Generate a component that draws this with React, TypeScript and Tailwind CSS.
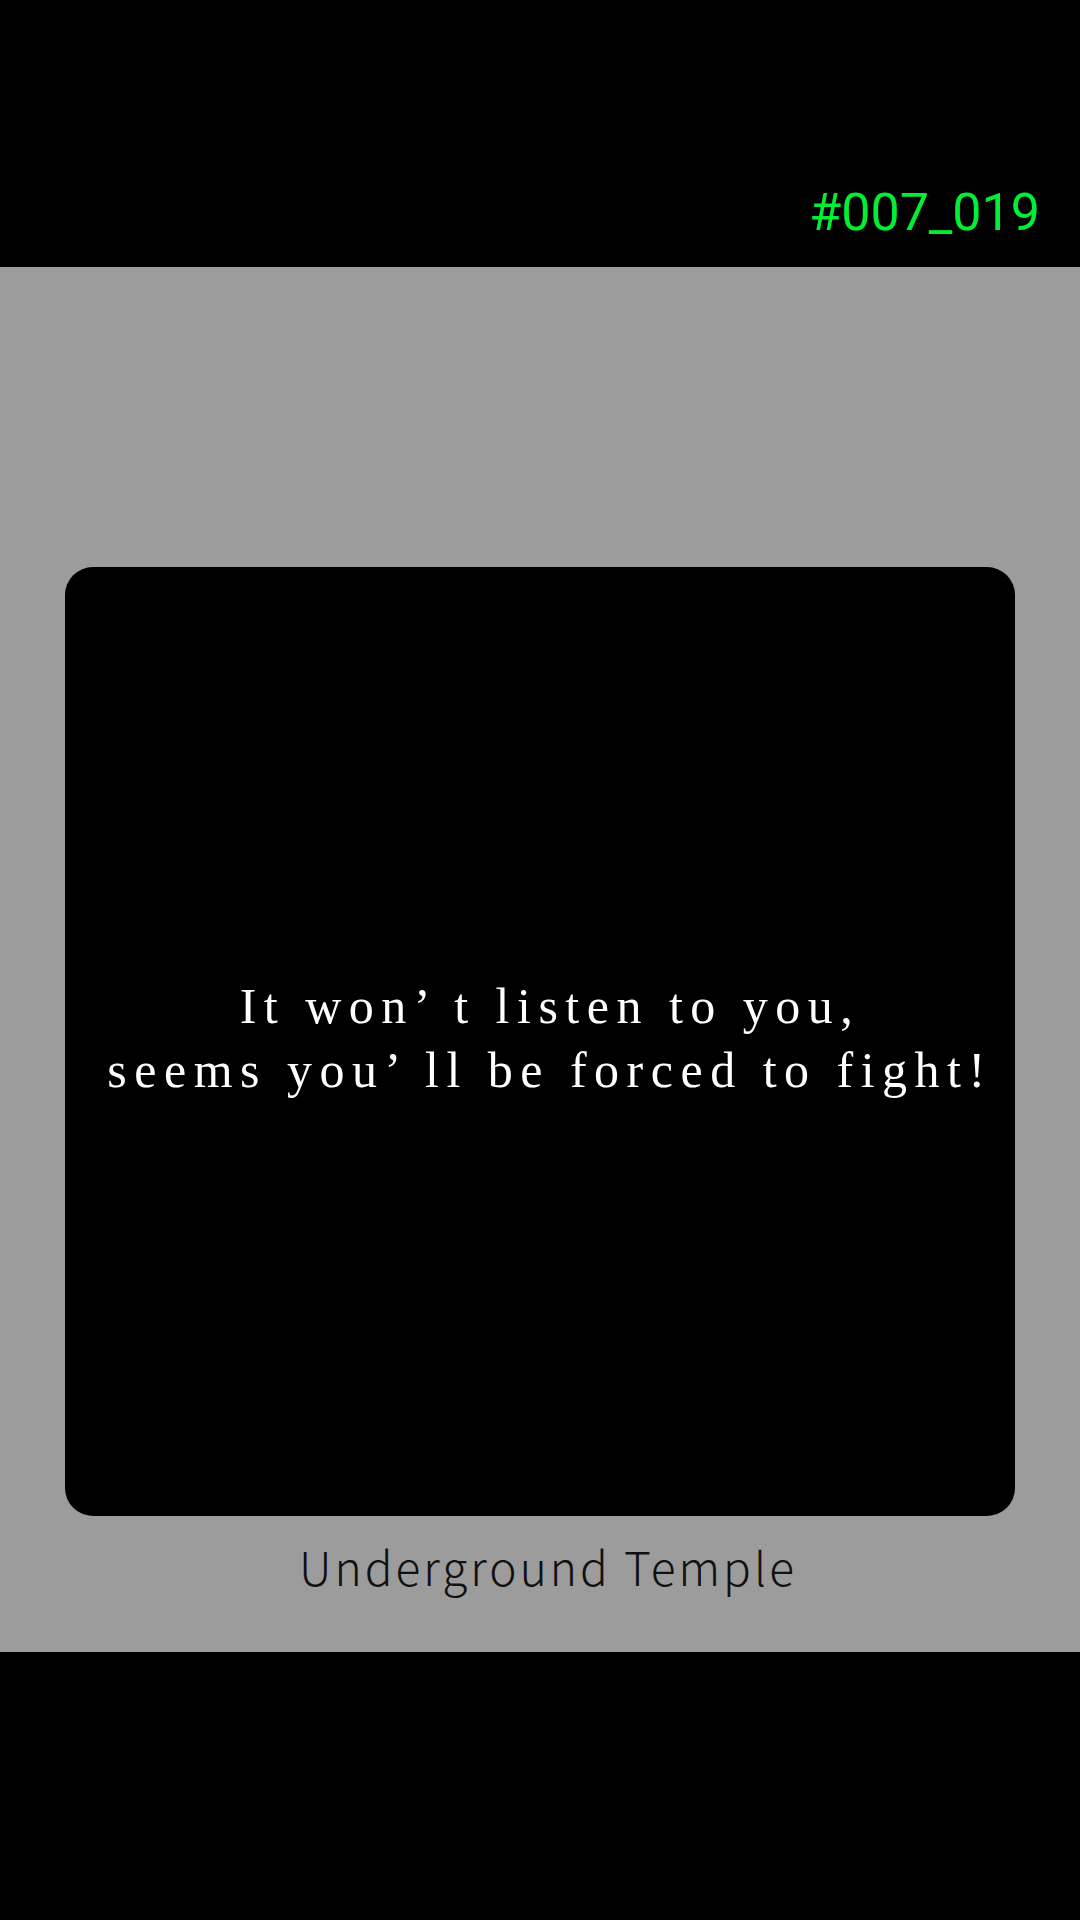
import React from 'react';

const App: React.FC = () => {
  return (
    <div className="flex h-[1920px] w-[1080px] flex-col bg-black">
      <div className="flex h-[267px] justify-end pr-[40px] pt-[174px]">
        <span className="text-[52px] text-[#00ee33]" style={{ fontFamily: 'Roboto, sans-serif' }}>
          #007_019
        </span>
      </div>
      <div className="flex h-[1385px] flex-col items-center bg-[#9c9c9c] pt-[300px]">
        <div className="flex h-[949px] w-[950px] items-center justify-center rounded-[28px] bg-black">
          <p
            className="pb-[8px] pl-[20px] text-center text-[50px] leading-[64px] tracking-[7.5px] text-white"
            style={{ fontFamily: '"Liberation Serif", serif' }}
          >
            It won’ t listen to you,
            <br />
            seems you’ ll be forced to fight!
          </p>
        </div>
        <div
          className="mt-[20px] pl-[16px] text-[46px] font-light leading-[60px] tracking-[3px] text-[#111]"
          style={{ fontFamily: '"Noto Sans CJK SC", sans-serif' }}
        >
          Underground Temple
        </div>
      </div>
      <div className="flex-1 bg-black" />
    </div>
  );
};

export default App;
